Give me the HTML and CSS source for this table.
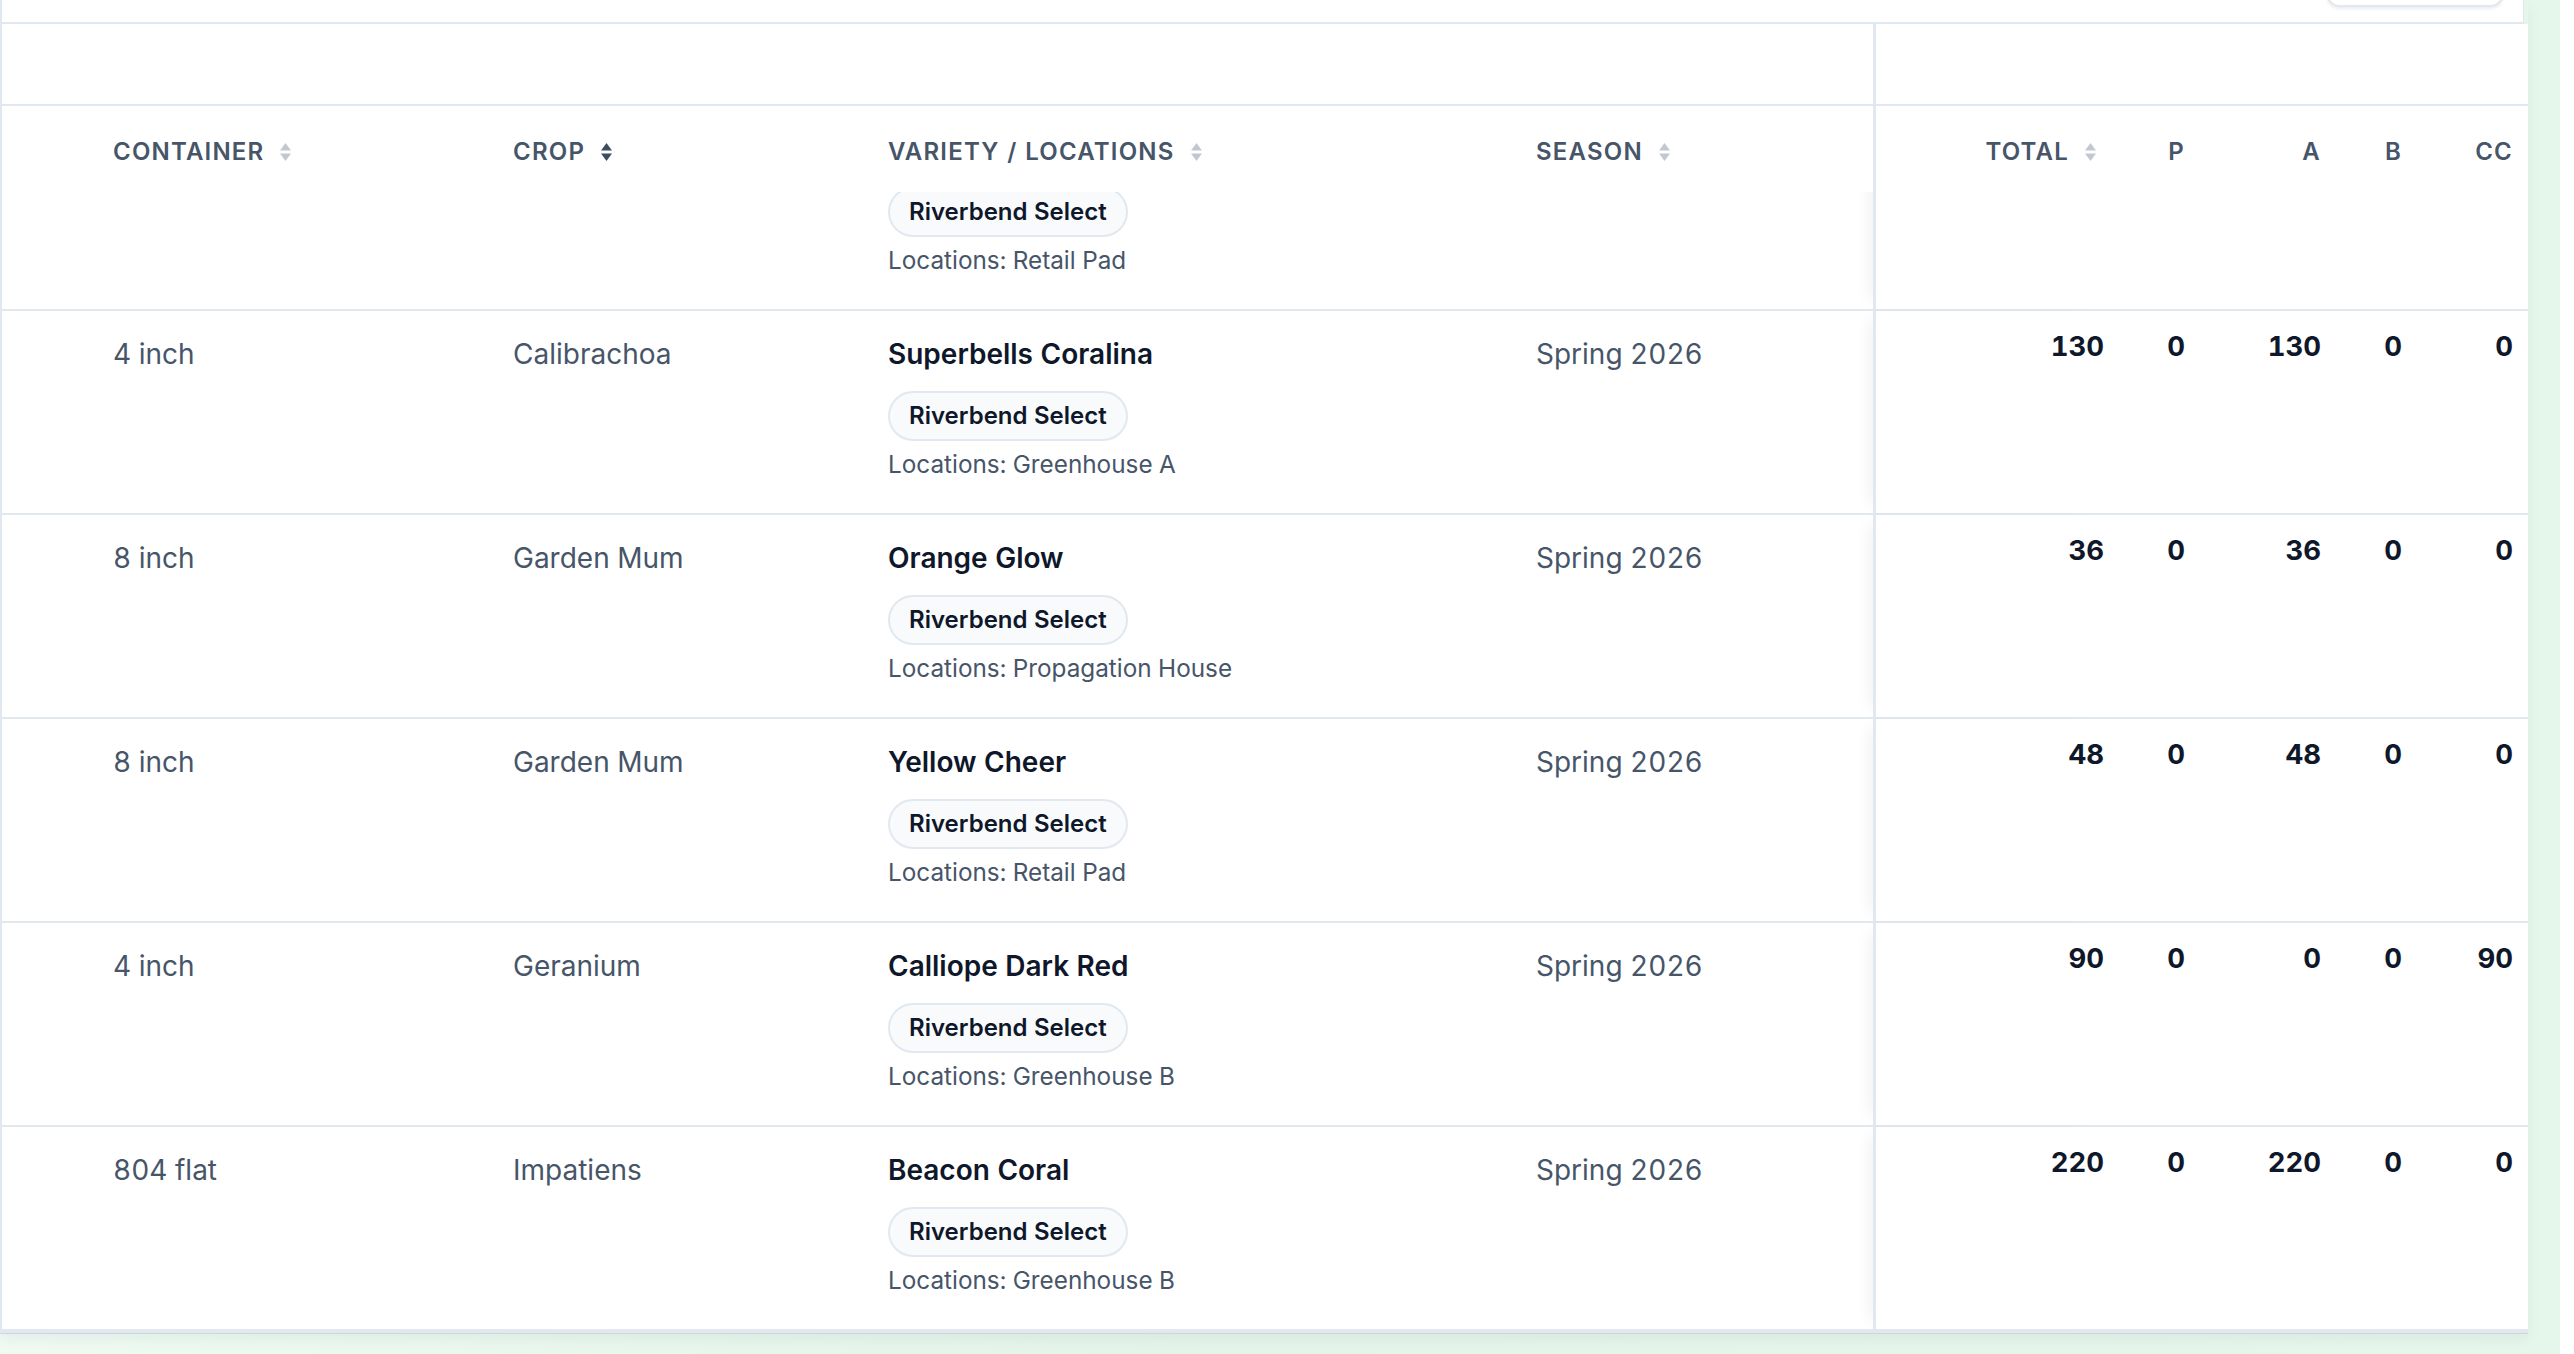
FILE: index.html
```html
<!DOCTYPE html>
<html lang="en">
<head>
<meta charset="utf-8">
<title>Plant Inventory</title>
<link rel="stylesheet" href="styles.css">
</head>
<body>
<div class="page">
  <div class="card">
    <div class="toolbar">
      <button class="tool-btn" type="button" aria-label="Options"></button>
    </div>
    <div class="table">
      <div class="grid group-row">
        <div class="group-left"></div>
        <div class="group-right"></div>
      </div>
      <div class="grid head-row">
        <div class="th"><div class="th-inner"><span>CONTAINER</span><svg class="sort" viewBox="0 0 11 18" width="11" height="18"><path d="M5.5 0L11 7.6H0Z"/><path d="M0 10.4H11L5.5 18Z"/></svg></div></div>
        <div class="th"><div class="th-inner"><span>CROP</span><svg class="sort active" viewBox="0 0 11 18" width="11" height="18"><path d="M5.5 0L11 7.6H0Z"/><path d="M0 10.4H11L5.5 18Z"/></svg></div></div>
        <div class="th"><div class="th-inner"><span>VARIETY / LOCATIONS</span><svg class="sort" viewBox="0 0 11 18" width="11" height="18"><path d="M5.5 0L11 7.6H0Z"/><path d="M0 10.4H11L5.5 18Z"/></svg></div></div>
        <div class="th"><div class="th-inner"><span>SEASON</span><svg class="sort" viewBox="0 0 11 18" width="11" height="18"><path d="M5.5 0L11 7.6H0Z"/><path d="M0 10.4H11L5.5 18Z"/></svg></div></div>
        <div class="th num total"><div class="th-inner"><span>TOTAL</span><svg class="sort" viewBox="0 0 11 18" width="11" height="18"><path d="M5.5 0L11 7.6H0Z"/><path d="M0 10.4H11L5.5 18Z"/></svg></div></div>
        <div class="th num"><div class="th-inner"><span>P</span></div></div>
        <div class="th num"><div class="th-inner"><span>A</span></div></div>
        <div class="th num"><div class="th-inner"><span>B</span></div></div>
        <div class="th num"><div class="th-inner"><span>CC</span></div></div>
      </div>
      <div class="body">
        <div class="grid row first">
          <div class="td"></div>
          <div class="td"></div>
          <div class="td variety">
            <div class="name"></div>
            <div class="chips"><span class="chip">Riverbend Select</span></div>
            <div class="locations">Locations: Retail Pad</div>
          </div>
          <div class="td"></div>
          <div class="td num total"></div>
          <div class="td num"></div>
          <div class="td num"></div>
          <div class="td num"></div>
          <div class="td num"></div>
        </div>
        <div class="grid row">
          <div class="td">4 inch</div>
          <div class="td">Calibrachoa</div>
          <div class="td variety">
            <div class="name">Superbells Coralina</div>
            <div class="chips"><span class="chip">Riverbend Select</span></div>
            <div class="locations">Locations: Greenhouse A</div>
          </div>
          <div class="td">Spring 2026</div>
          <div class="td num total">130</div>
          <div class="td num">0</div>
          <div class="td num">130</div>
          <div class="td num">0</div>
          <div class="td num">0</div>
        </div>
        <div class="grid row">
          <div class="td">8 inch</div>
          <div class="td">Garden Mum</div>
          <div class="td variety">
            <div class="name">Orange Glow</div>
            <div class="chips"><span class="chip">Riverbend Select</span></div>
            <div class="locations">Locations: Propagation House</div>
          </div>
          <div class="td">Spring 2026</div>
          <div class="td num total">36</div>
          <div class="td num">0</div>
          <div class="td num">36</div>
          <div class="td num">0</div>
          <div class="td num">0</div>
        </div>
        <div class="grid row">
          <div class="td">8 inch</div>
          <div class="td">Garden Mum</div>
          <div class="td variety">
            <div class="name">Yellow Cheer</div>
            <div class="chips"><span class="chip">Riverbend Select</span></div>
            <div class="locations">Locations: Retail Pad</div>
          </div>
          <div class="td">Spring 2026</div>
          <div class="td num total">48</div>
          <div class="td num">0</div>
          <div class="td num">48</div>
          <div class="td num">0</div>
          <div class="td num">0</div>
        </div>
        <div class="grid row">
          <div class="td">4 inch</div>
          <div class="td">Geranium</div>
          <div class="td variety">
            <div class="name">Calliope Dark Red</div>
            <div class="chips"><span class="chip">Riverbend Select</span></div>
            <div class="locations">Locations: Greenhouse B</div>
          </div>
          <div class="td">Spring 2026</div>
          <div class="td num total">90</div>
          <div class="td num">0</div>
          <div class="td num">0</div>
          <div class="td num">0</div>
          <div class="td num">90</div>
        </div>
        <div class="grid row">
          <div class="td">804 flat</div>
          <div class="td">Impatiens</div>
          <div class="td variety">
            <div class="name">Beacon Coral</div>
            <div class="chips"><span class="chip">Riverbend Select</span></div>
            <div class="locations">Locations: Greenhouse B</div>
          </div>
          <div class="td">Spring 2026</div>
          <div class="td num total">220</div>
          <div class="td num">0</div>
          <div class="td num">220</div>
          <div class="td num">0</div>
          <div class="td num">0</div>
        </div>
      </div>
    </div>
  </div>
</div>
</body>
</html>
```

FILE: styles.css
```css
* {
  box-sizing: border-box;
}

html,
body {
  margin: 0;
  padding: 0;
}

body {
  width: 2574px;
  height: 1354px;
  overflow: hidden;
  background: #ffffff;
  font-family: "Inter", "Noto Sans", "Liberation Sans", sans-serif;
  font-variant-numeric: tabular-nums;
  color: #475569;
}

.page {
  width: 2560px;
  height: 1354px;
  padding-right: 32px;
  background: linear-gradient(90deg, #eefaf2 0%, #e3f4e8 45%, #e5f7eb 100%);
}

.card {
  width: 2528px;
  border-left: 2px solid #e2e8f0;
  border-bottom: 2px solid #e2e8f0;
  box-shadow: 0 1px 0 #cdd6da, 0 6px 14px rgba(15, 23, 42, 0.05);
}

.toolbar {
  height: 24px;
  margin-right: 4px;
  display: flex;
  justify-content: flex-end;
  align-items: flex-end;
  padding: 0 19px 15px 0;
  overflow: hidden;
  background: #ffffff;
  border-bottom: 2px solid #e2e8f0;
  border-right: 1px solid #e2e8f0;
}

.tool-btn {
  flex-shrink: 0;
  width: 178px;
  height: 44px;
  border: 2px solid #e2e8f0;
  border-radius: 14px;
  background: #ffffff;
  box-shadow: 0 2px 3px rgba(15, 23, 42, 0.08);
  padding: 0;
}

.table {
  background: #ffffff;
}

.grid {
  display: grid;
  grid-template-columns: 400px 375px 648px 337px 231px 81px 136px 81px 111px;
  padding: 0 15px 0 111px;
}

.group-row {
  height: 82px;
  border-bottom: 2px solid #e2e8f0;
}

.group-left {
  grid-column: 1 / 5;
}

.group-right {
  grid-column: 5 / 10;
  border-left: 3px solid #e2e8f0;
}

.head-row {
  height: 86px;
}

.th {
  padding-top: 26px;
  font-size: 24px;
  font-weight: 600;
  letter-spacing: 0.05em;
  color: #475569;
}

.th-inner {
  display: flex;
  align-items: center;
  gap: 16px;
  height: 40px;
  line-height: 40px;
  white-space: nowrap;
}

.th.num .th-inner {
  justify-content: flex-end;
}

.th.total {
  border-left: 3px solid #e2e8f0;
  padding-right: 8px;
}

.sort {
  flex-shrink: 0;
  fill: #c3c8d0;
}

.sort.active {
  fill: #3f4c5f;
}

.body {
  overflow: hidden;
}

.row {
  height: 204px;
  border-bottom: 2px solid #e2e8f0;
}

.row.first {
  margin-top: -85px;
}

.td {
  padding-top: 23px;
  font-size: 28px;
  line-height: 40px;
  color: #475569;
  white-space: nowrap;
}

.td.num {
  padding-top: 15px;
  font-size: 27.5px;
  text-align: right;
  font-weight: 700;
  color: #0f172a;
}

.td.total {
  border-left: 3px solid #e2e8f0;
  box-shadow: -12px 0 16px -10px rgba(15, 23, 42, 0.07);
}

.name {
  height: 40px;
  font-weight: 600;
  color: #0f172a;
}

.chips {
  display: flex;
  margin-top: 17px;
}

.chip {
  border: 2px solid #e2e8f0;
  background: #f8fafc;
  border-radius: 999px;
  padding: 6px 19px;
  font-size: 24px;
  line-height: 34px;
  font-weight: 600;
  color: #0f172a;
}

.locations {
  margin-top: 6px;
  font-size: 24.3px;
  line-height: 34px;
  color: #475569;
}
```
